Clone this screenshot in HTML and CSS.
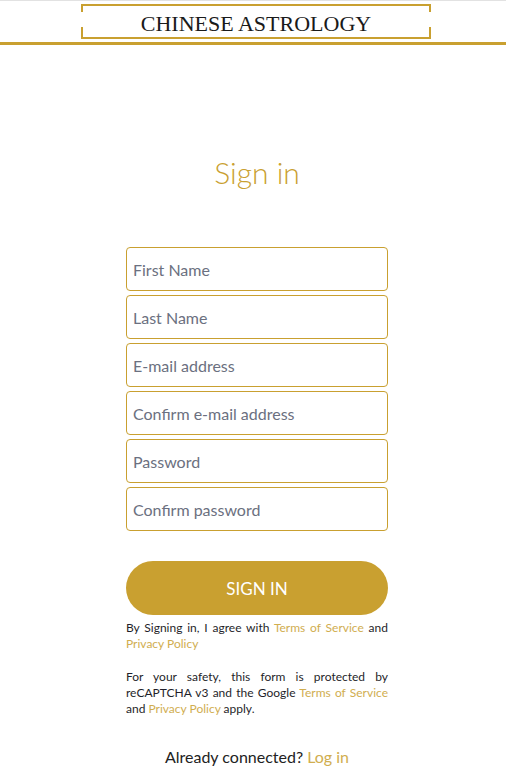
FILE: index.html
```html
<!DOCTYPE html>
<html lang="en">
<head>
<meta charset="utf-8">
<title>Sign in - Chinese Astrology</title>
<link rel="stylesheet" href="styles.css">
</head>
<body>
<header class="site-header">
  <div class="logo">
    <span class="logo-side left"></span>
    <span class="logo-text">CHINESE ASTROLOGY</span>
    <span class="logo-side right"></span>
  </div>
</header>
<main class="page">
  <h1 class="title">Sign in</h1>
  <form class="form">
    <input class="field" type="text" placeholder="First Name">
    <input class="field" type="text" placeholder="Last Name">
    <input class="field" type="email" placeholder="E-mail address">
    <input class="field" type="email" placeholder="Confirm e-mail address">
    <input class="field" type="password" placeholder="Password">
    <input class="field" type="password" placeholder="Confirm password">
    <button class="btn" type="button">SIGN IN</button>
    <p class="note">By Signing in, I agree with <a href="#">Terms of Service</a> and <a href="#">Privacy Policy</a></p>
    <p class="note note2">For your safety, this form is protected by reCAPTCHA v3 and the Google <a href="#">Terms of Service</a> and <a href="#">Privacy Policy</a> apply.</p>
  </form>
  <p class="already">Already connected? <a href="#">Log in</a></p>
</main>
</body>
</html>
```
FILE: styles.css
```css
* { box-sizing: border-box; }
html, body { margin: 0; padding: 0; background: #fff; }
body { font-family: "Lato", "Noto Sans", sans-serif; color: #222; }

.site-header {
  border-top: 1px solid #e2e2e2;
  border-bottom: 3px solid #c9a030;
  padding-top: 3px;
  height: 45px;
  display: flex;
  justify-content: center;
}
.logo {
  width: 350px;
  height: 35px;
  border-top: 2px solid #c9a030;
  border-bottom: 2px solid #c9a030;
  display: flex;
  align-items: stretch;
  margin-left: 6px;
}
.logo-side {
  width: 2px;
  background: linear-gradient(#c9a030 0 6px, transparent 6px 21px, #c9a030 21px);
}
.logo-text {
  flex: 1;
  text-align: center;
  font-family: "Liberation Serif", "DejaVu Serif", serif;
  font-size: 22px;
  line-height: 35px;
  color: #1a1a1a;
}

.page {
  display: flex;
  flex-direction: column;
  align-items: center;
  padding-left: 8px;
}
.title {
  margin: 109px 0 0;
  font-weight: 300;
  font-size: 30px;
  line-height: 36px;
  color: #c9a030;
}
.form {
  width: 262px;
  margin-top: 57px;
  display: flex;
  flex-direction: column;
  gap: 4px;
}
.field {
  height: 44px;
  border: 1px solid #c9a030;
  border-radius: 4px;
  padding: 0 6px;
  font-family: inherit;
  font-size: 16px;
  color: #333;
  outline: none;
}
.field::placeholder { color: #6b7080; }
.btn {
  margin-top: 26px;
  height: 54px;
  border: none;
  border-radius: 27px;
  background: #c9a030;
  color: #fff;
  font-family: inherit;
  font-size: 17px;
  cursor: pointer;
}
.note {
  margin: 1px 0 0;
  font-size: 12px;
  line-height: 16px;
  text-align: justify;
  color: #1f1f2a;
}
.note2 { margin-top: 13px; }
.note a, .already a { color: #c9a030; text-decoration: none; opacity: 0.85; }
.already {
  margin: 30px 0 0;
  font-size: 16px;
  color: #222;
}
```
